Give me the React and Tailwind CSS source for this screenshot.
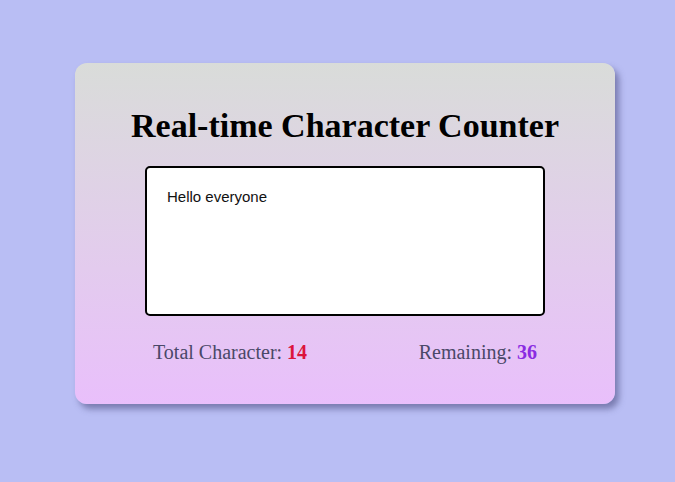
export default function App() {
  return (
    <div className="min-h-[482px] w-full bg-[#b9bef4] pt-[63px] pl-[75px]">
      <div className="w-[540px] h-[341px] rounded-[12px] bg-gradient-to-b from-[#d9dcd9] to-[#e9bffb] shadow-[4px_5px_6px_rgba(70,70,120,0.55)] flex flex-col items-center pt-[43px]">
        <h1 className="text-[34px] font-bold text-black leading-[39px] font-['Liberation_Serif',serif]">
          Real-time Character Counter
        </h1>
        <textarea
          readOnly
          defaultValue="Hello everyone"
          className="mt-[21px] w-[400px] h-[150px] border-2 border-black rounded-[5px] bg-white px-[20px] py-[20px] text-[15px] leading-[18px] text-[#111] font-['Liberation_Sans',Arial,sans-serif] resize-none outline-none"
        />
        <div className="mt-[25px] w-[384px] flex justify-between text-[20px] leading-[23px] text-[#4a4868] font-['Liberation_Serif',serif]">
          <span>
            Total Character: <b className="text-[#dc143c]">14</b>
          </span>
          <span>
            Remaining: <b className="text-[#8a2be2]">36</b>
          </span>
        </div>
      </div>
    </div>
  );
}
